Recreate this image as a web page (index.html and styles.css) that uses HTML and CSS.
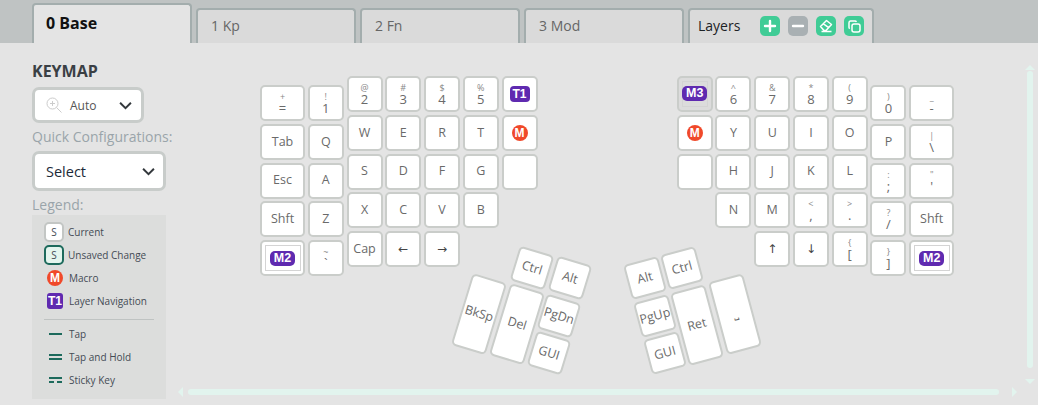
FILE: index.html
```html
<!DOCTYPE html>
<html lang="en">
<head>
<meta charset="utf-8">
<title>Keymap</title>
<link rel="stylesheet" href="styles.css">
</head>
<body>
<div class="app">
  <nav class="tabs">
    <div class="tab active">0 Base</div>
    <div class="tab">1 Kp</div>
    <div class="tab">2 Fn</div>
    <div class="tab">3 Mod</div>
    <div class="tab layers">
      <span class="layers-label">Layers</span>
      <span class="tool green"><svg viewBox="0 0 20 20"><path d="M10 5v10M5 10h10" stroke="#fff" stroke-width="2.4" stroke-linecap="round" fill="none"/></svg></span>
      <span class="tool grey"><svg viewBox="0 0 20 20"><path d="M5 10h10" stroke="#fff" stroke-width="2.4" stroke-linecap="round" fill="none"/></svg></span>
      <span class="tool green"><svg viewBox="0 0 20 20"><path d="M4.500 10.500 10.500 4.500l5 4-5.500 6H8zM7.500 7.800l5.500 4M5.500 15.500h10" stroke="#fff" stroke-width="1.500" stroke-linejoin="round" fill="none"/></svg></span>
      <span class="tool green"><svg viewBox="0 0 20 20"><rect x="8" y="8" width="8" height="8" rx="2" stroke="#fff" stroke-width="1.500" fill="none"/><path d="M12.500 5.800A1.800 1.800 0 0 0 11 5H6.500A1.800 1.800 0 0 0 5 6.800v4.400A1.800 1.800 0 0 0 5.800 12.600" stroke="#fff" stroke-width="1.500" fill="none"/></svg></span>
    </div>
  </nav>
  <main class="content">
    <aside class="sidebar">
      <h2 class="title">KEYMAP</h2>
      <div class="select zoom">
        <svg class="lens" viewBox="0 0 16 16"><circle cx="6.500" cy="6.500" r="5.500" stroke="#ccc" fill="none"/><path d="M6.500 4v5M4 6.500h5M10.500 10.500l5 5" stroke="#ccc" fill="none"/></svg>
        <span class="zoom-text">Auto</span>
        <svg class="chev" viewBox="0 0 12 8"><path d="M1 1.500l5 5 5-5" stroke="#33383c" stroke-width="1.800" fill="none"/></svg>
      </div>
      <div class="label quick">Quick Configurations:</div>
      <div class="select config">
        <span>Select</span>
        <svg class="chev" viewBox="0 0 12 8"><path d="M1 1.500l5 5 5-5" stroke="#33383c" stroke-width="1.800" fill="none"/></svg>
      </div>
      <div class="label legend-label">Legend:</div>
      <div class="legend">
        <div class="legend-row"><span class="swatch cur">S</span>Current</div>
        <div class="legend-row"><span class="swatch chg">S</span>Unsaved Change</div>
        <div class="legend-row"><span class="macro small">M</span>Macro</div>
        <div class="legend-row"><span class="badge-t small">T1</span>Layer Navigation</div>
        <hr class="divider">
        <div class="legend-row line"><span class="tapmark"><i></i></span>Tap</div>
        <div class="legend-row line"><span class="tapmark"><i></i><i></i></span>Tap and Hold</div>
        <div class="legend-row line"><span class="tapmark"><i></i><i class="dash"></i></span>Sticky Key</div>
      </div>
    </aside>
    <section class="board">
      <div class="half">
        <div class="col drop wide">
          <div class="key"><small>+</small><b>=</b></div>
          <div class="key">Tab</div>
          <div class="key">Esc</div>
          <div class="key">Shft</div>
          <div class="key"><span class="boxed"><span class="pill">M2</span></span></div>
        </div>
        <div class="col drop">
          <div class="key"><small>!</small><b>1</b></div>
          <div class="key">Q</div>
          <div class="key">A</div>
          <div class="key">Z</div>
          <div class="key"><small>~</small><b>`</b></div>
        </div>
        <div class="col">
          <div class="key"><small>@</small><b>2</b></div>
          <div class="key">W</div>
          <div class="key">S</div>
          <div class="key">X</div>
          <div class="key">Cap</div>
        </div>
        <div class="col">
          <div class="key"><small>#</small><b>3</b></div>
          <div class="key">E</div>
          <div class="key">D</div>
          <div class="key">C</div>
          <div class="key arrowkey">←</div>
        </div>
        <div class="col">
          <div class="key"><small>$</small><b>4</b></div>
          <div class="key">R</div>
          <div class="key">F</div>
          <div class="key">V</div>
          <div class="key arrowkey">→</div>
        </div>
        <div class="col">
          <div class="key"><small>%</small><b>5</b></div>
          <div class="key">T</div>
          <div class="key">G</div>
          <div class="key">B</div>
        </div>
        <div class="col">
          <div class="key"><span class="badge-t">T1</span></div>
          <div class="key"><span class="macro">M</span></div>
          <div class="key"></div>
        </div>
      </div>
      <div class="half">
        <div class="col">
          <div class="key selected"><span class="boxed"><span class="pill">M3</span></span></div>
          <div class="key"><span class="macro">M</span></div>
          <div class="key"></div>
        </div>
        <div class="col">
          <div class="key"><small>^</small><b>6</b></div>
          <div class="key">Y</div>
          <div class="key">H</div>
          <div class="key">N</div>
        </div>
        <div class="col">
          <div class="key"><small>&amp;</small><b>7</b></div>
          <div class="key">U</div>
          <div class="key">J</div>
          <div class="key">M</div>
          <div class="key arrowkey">↑</div>
        </div>
        <div class="col">
          <div class="key"><small>*</small><b>8</b></div>
          <div class="key">I</div>
          <div class="key">K</div>
          <div class="key"><small>&lt;</small><b>,</b></div>
          <div class="key arrowkey">↓</div>
        </div>
        <div class="col">
          <div class="key"><small>(</small><b>9</b></div>
          <div class="key">O</div>
          <div class="key">L</div>
          <div class="key"><small>&gt;</small><b>.</b></div>
          <div class="key"><small>{</small><b>[</b></div>
        </div>
        <div class="col drop">
          <div class="key"><small>)</small><b>0</b></div>
          <div class="key">P</div>
          <div class="key"><small>:</small><b>;</b></div>
          <div class="key"><small>?</small><b>/</b></div>
          <div class="key"><small>}</small><b>]</b></div>
        </div>
        <div class="col drop wide">
          <div class="key"><small>_</small><b>-</b></div>
          <div class="key"><small>|</small><b>\</b></div>
          <div class="key"><small>"</small><b>'</b></div>
          <div class="key">Shft</div>
          <div class="key"><span class="boxed"><span class="pill">M2</span></span></div>
        </div>
      </div>
      <div class="key thumb l tall t-bksp">BkSp</div>
      <div class="key thumb l tall t-del">Del</div>
      <div class="key thumb l t-lctrl">Ctrl</div>
      <div class="key thumb l t-lalt">Alt</div>
      <div class="key thumb l t-pgdn">PgDn</div>
      <div class="key thumb l t-lgui">GUI</div>
      <div class="key thumb r t-ralt">Alt</div>
      <div class="key thumb r t-rctrl">Ctrl</div>
      <div class="key thumb r t-pgup">PgUp</div>
      <div class="key thumb r t-rgui">GUI</div>
      <div class="key thumb r tall t-ret">Ret</div>
      <div class="key thumb r tall t-spc">⎵</div>
    </section>
    <div class="sb-v"></div>
    <div class="sb-h"></div>
    <span class="arrow up"></span>
    <span class="arrow down"></span>
    <span class="arrow left"></span>
    <span class="arrow right"></span>
  </main>
</div>
</body>
</html>
```

FILE: styles.css
```css
* { box-sizing: border-box; }
html, body { margin: 0; height: 100%; overflow: hidden; }
body { font-family: "Open Sans", sans-serif; background: #e4e4e4; color: #666; }
.app { display: flex; flex-direction: column; height: 405px; }

.tabs { flex: 0 0 43px; display: flex; align-items: flex-end; gap: 4px; padding-left: 32px; background: #bfc3c3; }
.tab { width: 160px; height: 35px; padding: 6px 0 0 13px; font-size: 14px; color: #666; background: #dadada; border: 2px solid #a3adad; border-bottom: 0; border-radius: 4px 4px 0 0; }
.tab.active { height: 40px; padding: 7px 0 0 12px; font-size: 16px; font-weight: 700; color: #111; background: #e4e4e4; }
.tab.layers { width: 186px; display: flex; align-items: flex-start; padding: 6px 0 0 8px; color: #1c2226; }
.layers-label { width: 62px; line-height: 20px; }
.tool { width: 20px; height: 20px; margin-right: 8px; border-radius: 5px; display: block; }
.tool svg { display: block; width: 20px; height: 20px; }
.tool.green { background: #40cc96; }
.tool.grey { background: #a9b0b3; }

.content { position: relative; flex: 1; display: flex; }
.sidebar { flex: 0 0 166px; width: 166px; min-width: 0; padding-left: 32px; }
.title { margin: 17px 0 5px; font-size: 16px; line-height: 22px; font-weight: 700; color: #3a3f44; }
.select { display: flex; align-items: center; background: #fff; border: 3px solid #c8ccca; border-radius: 7px; color: #333; }
.zoom { width: 112px; height: 36px; padding: 0 9px 0 11px; font-size: 12px; }
.lens { width: 16px; height: 16px; }
.zoom-text { margin-left: 8px; color: #555; }
.chev { width: 13px; height: 9px; margin-left: auto; display: block; }
.label { font-size: 14px; line-height: 20px; color: #9aa4aa; white-space: nowrap; }
.quick { margin-top: 4px; }
.config { width: 134px; height: 40px; margin-top: 4px; padding: 0 8px 0 11px; font-size: 14.500px; color: #1c2a38; }
.legend-label { margin-top: 4px; }
.legend { width: 134px; height: 184px; padding: 5px 12px 0; background: #dcdddc; font-size: 10px; color: #444b55; }
.legend-row { display: flex; align-items: center; height: 23px; white-space: nowrap; }
.swatch { width: 20px; height: 20px; margin: 0 4px 0 0; flex: none; display: flex; align-items: center; justify-content: center; border-radius: 5px; border: 2px solid #c3c6c4; background: #fff; font-size: 10px; }
.swatch.chg { border-color: #1d6a5c; background: #e4f5ee; }
.macro { width: 16px; height: 16px; border-radius: 50%; background: #f0492a; color: #fff; font: 700 12px/16px "Liberation Sans", sans-serif; text-align: center; display: block; }
.badge-t { width: 20px; height: 16px; border-radius: 4px; background: #5f2ab0; color: #fff; font: 700 12px/16px "Liberation Sans", sans-serif; text-align: center; display: block; }
.macro.small { margin: 0 6px 0 3px; flex: none; }
.badge-t.small { width: 16px; margin: 0 6px 0 3px; flex: none; border-radius: 3px; }
.divider { width: 110px; height: 1px; margin: 7px 0 3px; border: 0; background: #bfc3c2; }
.legend-row.line { height: 22.700px; }
.tapmark { width: 12.500px; margin: 0 7.500px 0 5px; flex: none; display: flex; flex-direction: column; gap: 2px; }
.tapmark i { display: block; height: 2px; background: #1d6a5c; }
.tapmark i.dash { background: linear-gradient(90deg, #1d6a5c 0 5px, transparent 5px 8px, #1d6a5c 8px); }

.board { position: relative; flex: 1; display: flex; gap: 139.200px; padding: 33px 0 0 94px; align-items: flex-start; }
.half { display: flex; gap: 2.750px; }
.col { display: flex; flex-direction: column; gap: 2.750px; width: 36px; }
.col.drop { margin-top: 9px; }
.col.wide { width: 45px; }
.key { height: 36px; display: flex; flex-direction: column; align-items: center; justify-content: center; background: #fff; border: 2px solid #cacdca; border-radius: 5px; font-size: 12.500px; color: #6a6a6a; line-height: 1; }
.key small { font-size: 9px; line-height: 11px; color: #888; }
.key b { font-weight: 400; font-size: 13px; line-height: 13px; }
.key.selected { background: #dcdcdc; }
.arrowkey { font-family: "DejaVu Sans", sans-serif; font-size: 12px; color: #444; }
.boxed { width: 36px; height: 26px; display: flex; align-items: center; justify-content: center; border: 1px solid #d4d4d4; }
.key.selected .boxed { width: 26px; height: 26px; margin-top: -1px; justify-content: center; }
.pill { flex: none; width: 25px; height: 15px; border-radius: 5px; background: #5f2ab0; color: #fff; text-align: center; font: 700 12.500px/15px "Liberation Sans", sans-serif; }

.thumb { position: absolute; width: 36px; }
.thumb.tall { height: 74.750px; }
.thumb.l { transform: translate(-50%, -50%) rotate(17deg); }
.thumb.r { transform: translate(-50%, -50%) rotate(-15deg); }
.t-bksp { left: 313.300px; top: 271px; }
.t-del { left: 350.700px; top: 281px; }
.t-lctrl { left: 366px; top: 225px; }
.t-lalt { left: 403.500px; top: 235px; }
.t-pgdn { left: 393px; top: 272.700px; }
.t-lgui { left: 383.300px; top: 309.700px; }
.t-ralt { left: 479px; top: 235.300px; }
.t-rctrl { left: 516.300px; top: 224.700px; }
.t-pgup { left: 489px; top: 273px; }
.t-rgui { left: 499px; top: 310.300px; }
.t-ret { left: 531.300px; top: 281.700px; }
.t-spc { left: 569px; top: 271px; }

.sb-v { position: absolute; left: 1027px; top: 28px; width: 6px; height: 297px; border-radius: 3px; background: #e2f4ee; }
.sb-h { position: absolute; left: 188px; top: 346px; width: 811px; height: 6px; border-radius: 3px; background: #e2f4ee; }
.arrow { position: absolute; width: 0; height: 0; border: 5px solid transparent; }
.arrow.up { left: 1025px; top: 17px; border-bottom-color: #e2f4ee; }
.arrow.down { left: 1025px; top: 336px; border-top-color: #e2f4ee; }
.arrow.left { left: 173px; top: 344px; border-right-color: #e2f4ee; }
.arrow.right { left: 1012px; top: 344px; border-left-color: #e2f4ee; }
```
